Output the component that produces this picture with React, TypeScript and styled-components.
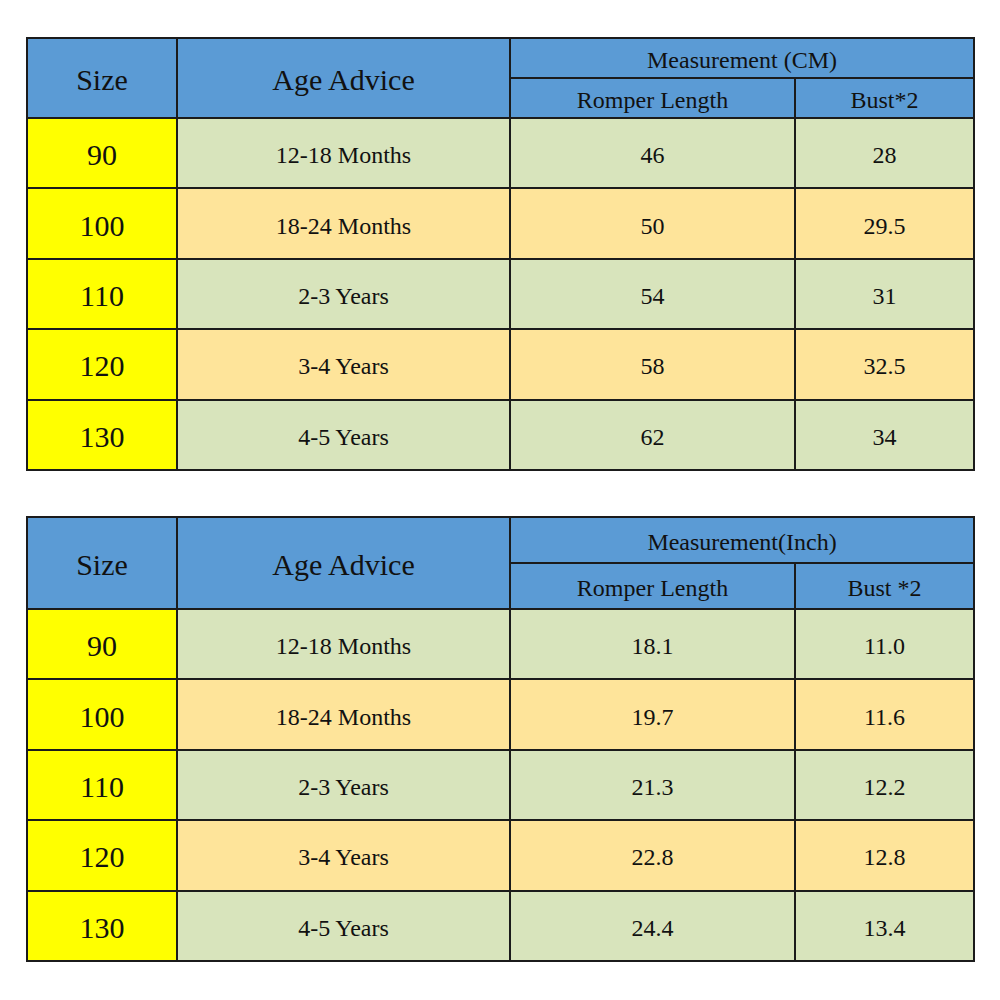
import React from "react";
import styled, { createGlobalStyle } from "styled-components";

const Global = createGlobalStyle`
  html, body { margin: 0; padding: 0; background: #fff; }
  body { font-family: "Liberation Serif", "Times New Roman", serif; color: #111; }
`;

const Page = styled.div`
  width: 1000px;
  height: 1000px;
  box-sizing: border-box;
  padding: 37px 0 0 26px;
  display: flex;
  flex-direction: column;
  gap: 45px;
`;

const Table = styled.table`
  width: 949px;
  border-collapse: collapse;
  table-layout: fixed;
  font-family: "Liberation Serif", "Times New Roman", serif;
`;

const Col = styled.col<{ $w: number }>`
  width: ${(p) => p.$w}px;
`;

const colors = {
  blue: "#5b9bd5",
  green: "#d8e4bc",
  tan: "#fee49a",
  yellow: "#ffff00",
};

type Tone = keyof typeof colors;

const Cell = styled.td<{ $tone: Tone; $size: number }>`
  border: 2px solid #1b1b1b;
  background: ${(p) => colors[p.$tone]};
  font-size: ${(p) => p.$size}px;
  font-weight: 400;
  text-align: center;
  vertical-align: middle;
  padding: 4px 0 0;
  line-height: 1;
  color: #111;
`;

const HeadCell = styled(Cell).attrs({ as: "th" })``;

const HeadRow = styled.tr<{ $h: number }>`
  height: ${(p) => p.$h}px;
`;

const DataRow = styled.tr`
  height: 70.4px;
`;

type Row = [string, string, string, string];

const cmRows: Row[] = [
  ["90", "12-18 Months", "46", "28"],
  ["100", "18-24 Months", "50", "29.5"],
  ["110", "2-3 Years", "54", "31"],
  ["120", "3-4 Years", "58", "32.5"],
  ["130", "4-5 Years", "62", "34"],
];

const inchRows: Row[] = [
  ["90", "12-18 Months", "18.1", "11.0"],
  ["100", "18-24 Months", "19.7", "11.6"],
  ["110", "2-3 Years", "21.3", "12.2"],
  ["120", "3-4 Years", "22.8", "12.8"],
  ["130", "4-5 Years", "24.4", "13.4"],
];

function SizeTable({
  title,
  bust,
  rows,
  headH,
}: {
  title: string;
  bust: string;
  rows: Row[];
  headH: number;
}) {
  return (
    <Table>
      <colgroup>
        <Col $w={150} />
        <Col $w={333} />
        <Col $w={285} />
        <Col $w={179} />
      </colgroup>
      <tbody>
        <HeadRow $h={headH}>
          <HeadCell rowSpan={2} $tone="blue" $size={30}>Size</HeadCell>
          <HeadCell rowSpan={2} $tone="blue" $size={30}>Age Advice</HeadCell>
          <HeadCell colSpan={2} $tone="blue" $size={24}>{title}</HeadCell>
        </HeadRow>
        <HeadRow $h={headH}>
          <HeadCell $tone="blue" $size={24}>Romper Length</HeadCell>
          <HeadCell $tone="blue" $size={24}>{bust}</HeadCell>
        </HeadRow>
        {rows.map((r, i) => {
          const tone: Tone = i % 2 === 0 ? "green" : "tan";
          return (
            <DataRow key={r[0]}>
              <Cell $tone="yellow" $size={30}>{r[0]}</Cell>
              <Cell $tone={tone} $size={24}>{r[1]}</Cell>
              <Cell $tone={tone} $size={24}>{r[2]}</Cell>
              <Cell $tone={tone} $size={24}>{r[3]}</Cell>
            </DataRow>
          );
        })}
      </tbody>
    </Table>
  );
}

export default function App() {
  return (
    <>
      <Global />
      <Page>
        <SizeTable title="Measurement (CM)" bust="Bust*2" rows={cmRows} headH={40} />
        <SizeTable title="Measurement(Inch)" bust="Bust *2" rows={inchRows} headH={46} />
      </Page>
    </>
  );
}
